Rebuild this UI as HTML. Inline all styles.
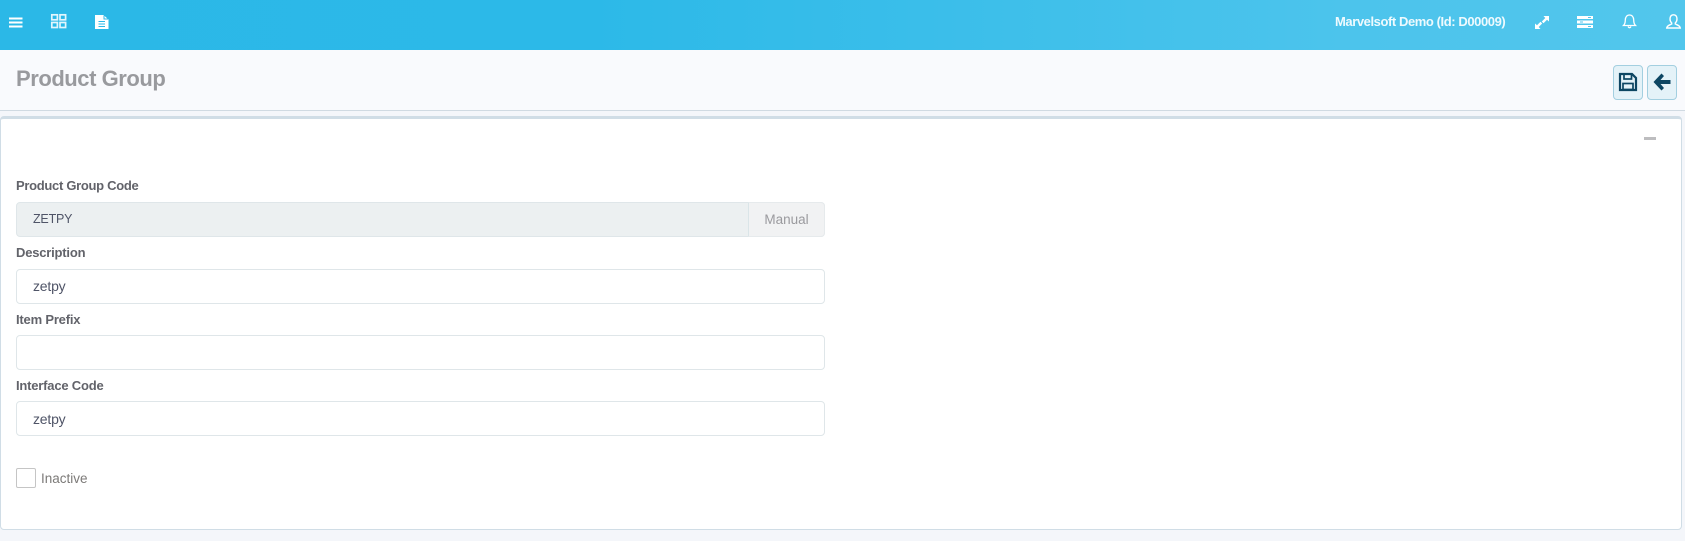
<!DOCTYPE html>
<html><head><meta charset="utf-8"><style>
html,body{margin:0;padding:0}
body{width:1685px;height:541px;position:relative;overflow:hidden;background:#f4f6fa;font-family:"Liberation Sans",sans-serif}
.a{position:absolute;white-space:nowrap}
.top{left:0;top:0;width:1685px;height:50px;background:linear-gradient(90deg,#2bb8e7,#2cb9e8 35%,#4cc4ec 80%,#52c6ec);box-shadow:0 1px 3px rgba(0,0,0,.12)}
.hd{left:0;top:50px;width:1685px;height:60px;background:#f9fafd;border-bottom:1px solid #d0dae2}
.card{left:0;top:116px;width:1680px;height:410px;background:#fff;border:1px solid #d0dde6;border-top:3px solid #d0dde6;border-radius:4px}
.lb{left:16px;font-size:13px;font-weight:bold;color:#62636a;line-height:16px;letter-spacing:-.2px}
.in{left:16px;width:807px;height:33px;border:1px solid #dfe6e9;border-radius:4px;background:#fff;font-size:14px;color:#4f5467;line-height:33px;text-indent:16px}
.btn{top:65px;width:28px;height:33px;border:1px solid #a3cfe0;border-radius:4px;background:#e4f2f8}
svg{position:absolute;overflow:visible}
</style></head><body>
<div class="a top"></div>
<svg style="left:9px;top:17px" width="14" height="11"><path d="M0 1.500H13.500M0 5.500H13.500M0 9.500H13.500" stroke="#fff" stroke-width="2"/></svg>
<svg style="left:51px;top:14px" width="16" height="14" fill="none" stroke="#e2f6fd" stroke-width="1.700"><rect x=".8" y=".8" width="5.600" height="5"/><rect x="9" y=".8" width="5.600" height="5"/><rect x=".8" y="8.500" width="5.600" height="5"/><rect x="9" y="8.500" width="5.600" height="5"/></svg>
<svg style="left:95px;top:15px" width="14" height="14"><path d="M0 0H8.500L13.500 4.500V14H0Z" fill="#fff"/><path d="M3.500 6.500H10M3.500 9H10M3.500 11.500H10" stroke="#2cb9e8"/><path d="M9 0.500V4H13" stroke="#2cb9e8" fill="none"/></svg>
<div class="a" style="left:1335px;top:13px;font-size:13px;font-weight:bold;color:#eefafe;line-height:18px;letter-spacing:-.42px">Marvelsoft Demo (Id: D00009)</div>
<svg style="left:1535px;top:16px" width="14" height="13"><path d="M8.500 0H14V5.500L12 3.800L8.500 7.300L6.800 5.500L10.300 2ZM5.500 13H0V7.500L2 9.200L5.500 5.700L7.200 7.500L3.700 11Z" fill="#fff"/></svg>
<svg style="left:1577px;top:16px" width="16" height="12"><path d="M0 0H16V3H0ZM0 4.500H16V7.500H0ZM0 9H16V12H0Z" fill="#fff"/><path d="M11 1.500H14M3 6H6M11 10.500H14" stroke="#52c6ec"/></svg>
<svg style="left:1623px;top:14px" width="13" height="15" fill="none" stroke="#fff" stroke-width="1.300"><path d="M.5 11.500C2 10 2.300 8.500 2.300 6C2.300 3 4 1 6.500 1S10.700 3 10.700 6C10.700 8.500 11 10 12.500 11.500Z"/><path d="M5 12.500Q6.500 15 8 12.500"/></svg>
<svg style="left:1666px;top:14px" width="15" height="15" fill="none" stroke="#fff" stroke-width="1.400"><path d="M7.500.8C10 .8 11 2.800 11 5C11 7 10 8.300 9.300 9V10C11 10.800 14 11.500 14.300 14H.7C1 11.500 4 10.800 5.700 10V9C5 8.300 4 7 4 5C4 2.800 5 .8 7.500 .8Z"/></svg>

<div class="a hd"></div>
<div class="a" style="left:16px;top:65px;font-size:22px;font-weight:bold;color:#999a9e;line-height:28px;letter-spacing:-.45px">Product Group</div>
<div class="a btn" style="left:1613px"></div>
<div class="a btn" style="left:1647px"></div>
<svg style="left:1619px;top:73px" width="18" height="18" fill="none"><path d="M1 1H13L17 5V17H1Z" stroke="#0d4663" stroke-width="2.200"/><rect x="5" y="1" width="7.500" height="5" stroke="#0d4663" stroke-width="1.700"/><rect x="4" y="10.500" width="10" height="6" stroke="#0d4663" stroke-width="1.700"/></svg>
<svg style="left:1653px;top:73px" width="18" height="18"><path d="M8.500 0.500L0.500 9L8.500 17.500L11 15L7.500 11H17.500V7H7.500L11 3Z" fill="#0d4663"/></svg>

<div class="a card"></div>
<div class="a" style="left:1644px;top:137px;width:12px;height:3px;background:#bdbdbf"></div>

<div class="a lb" style="top:178px;letter-spacing:-.3px">Product Group Code</div>
<div class="a in" style="top:202px;background:#ecf0f1;border-color:#dfe6e9;font-size:12.500px;letter-spacing:-.2px">ZETPY</div>
<div class="a" style="left:748px;top:202px;width:75px;height:33px;background:#f1f2f3;border:1px solid #e6eaec;border-radius:0 4px 4px 0;border-left-color:#dae5e8;font-size:13.500px;color:#9a9a9e;line-height:33px;text-align:center">Manual</div>

<div class="a lb" style="top:245px">Description</div>
<div class="a in" style="top:269px;letter-spacing:-.2px">zetpy</div>

<div class="a lb" style="top:312px">Item Prefix</div>
<div class="a in" style="top:335px"></div>

<div class="a lb" style="top:378px">Interface Code</div>
<div class="a in" style="top:401px;letter-spacing:-.2px;line-height:34px">zetpy</div>

<div class="a" style="left:16px;top:468px;width:18px;height:18px;border:1px solid #c5c5c5;border-radius:2px;background:#fff"></div>
<div class="a" style="left:41px;top:470px;font-size:13.500px;color:#7c7a78;line-height:18px">Inactive</div>
</body></html>
